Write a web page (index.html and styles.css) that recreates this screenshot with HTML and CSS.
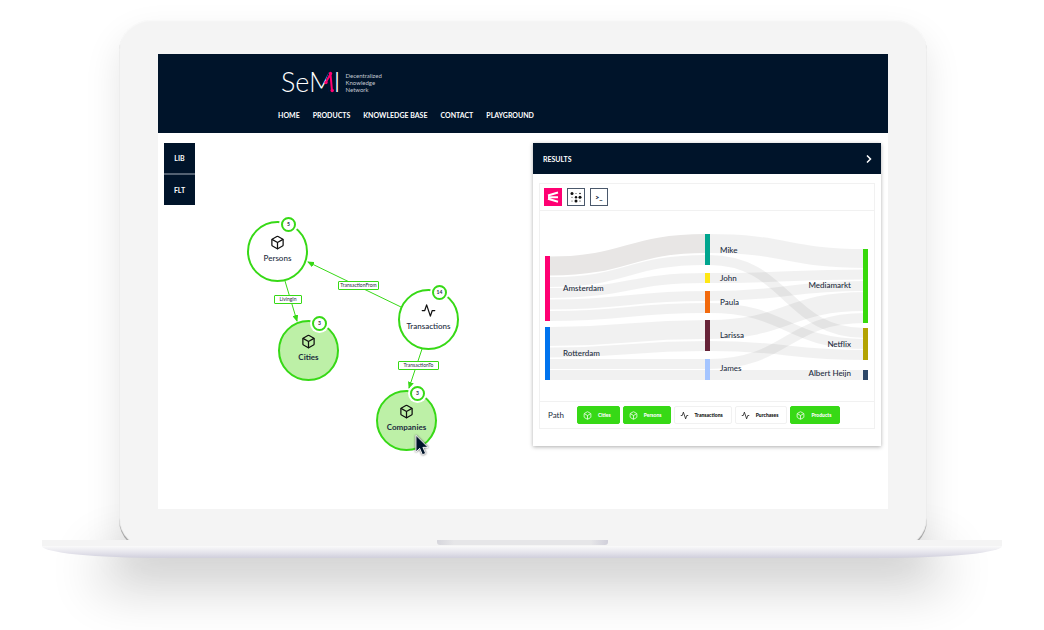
FILE: index.html
```html
<!DOCTYPE html>
<html lang="en">
<head>
<meta charset="utf-8">
<title>SeMI Playground</title>
<link rel="stylesheet" href="styles.css">
</head>
<body>
<svg class="defs" aria-hidden="true">
  <symbol id="cube" viewBox="0 0 24 24"><path d="M21 16V8a2 2 0 0 0-1-1.700l-7-4a2 2 0 0 0-2 0l-7 4A2 2 0 0 0 3 8v8a2 2 0 0 0 1 1.700l7 4a2 2 0 0 0 2 0l7-4a2 2 0 0 0 1-1.700z"/><path d="M3.300 7 12 12l8.700-5M12 22V12"/></symbol>
  <symbol id="pulse" viewBox="0 0 24 24"><path d="M22 12h-4l-3 9L9 3l-3 9H2"/></symbol>
</svg>
<div class="laptop">
  <div class="lid">
    <div class="screen">
      <header class="header">
        <a class="brand" href="#">
          <span class="logo">SeMI
            <svg class="logo-mark" viewBox="0 0 12 24" aria-hidden="true"><path class="mark-bg" d="M8.500 2 5 11M8.500 2v21"/><path d="M7.500 4 3 12M7.500 4l1.500 17"/><circle cx="7.500" cy="3.500" r="1.700"/><circle cx="3" cy="12.500" r="1.700"/><circle cx="9.200" cy="20.500" r="1.700"/></svg>
          </span>
          <span class="tagline">Decentralized<br>Knowledge<br>Network</span>
        </a>
        <nav class="nav">
          <a href="#">HOME</a><a href="#">PRODUCTS</a><a href="#">KNOWLEDGE BASE</a><a href="#">CONTACT</a><a href="#">PLAYGROUND</a>
        </nav>
      </header>
      <main class="workspace">
        <div class="tools"><button>LIB</button><button>FLT</button></div>
        <section class="graph">
          <svg class="edges" viewBox="0 0 338 316" aria-hidden="true">
            <defs><marker id="arrow" viewBox="0 0 7 6" refX="6" refY="3" markerWidth="7" markerHeight="6" markerUnits="userSpaceOnUse" orient="auto"><path d="M0 0l7 3-7 3z"/></marker></defs>
            <path d="M206 164 113 119"/><path d="M90 138 102 178"/><path d="M227 206 214 245"/>
          </svg>
          <span class="edge-label living">LivingIn</span>
          <span class="edge-label from">TransactionFrom</span>
          <span class="edge-label to">TransactionTo</span>
          <div class="node persons"><span class="count">5</span><svg><use href="#cube"/></svg><span>Persons</span></div>
          <div class="node transactions"><span class="count">14</span><svg><use href="#pulse"/></svg><span>Transactions</span></div>
          <div class="node active cities"><span class="count">3</span><svg><use href="#cube"/></svg><span>Cities</span></div>
          <div class="node active companies"><span class="count">3</span><svg><use href="#cube"/></svg><span>Companies</span></div>
          <svg class="cursor" viewBox="0 0 14 24" aria-hidden="true"><path d="M1 1v18l4-4 3 7 3.500-1.500-3-6.500H14z"/></svg>
        </section>
        <section class="results">
          <h2 class="results-title">RESULTS
            <button class="chevron" aria-label="Collapse"><svg viewBox="0 0 6 8"><path d="M1 .5 4.500 4 1 7.500"/></svg></button>
          </h2>
          <div class="frame">
            <div class="views">
              <button class="view selected" aria-label="Flow"><svg viewBox="0 0 16 16"><path d="M3 6.500 13 3.500M3 8.200h10M3 9.800l10 3"/></svg></button>
              <button class="view" aria-label="Matrix"><svg viewBox="0 0 16 16"><circle cx="4" cy="4.500" r="1.500"/><circle cx="8" cy="4.500" r=".5"/><circle cx="12" cy="4.500" r=".8"/><circle cx="4" cy="8.200" r=".5"/><circle cx="8" cy="8.200" r="1.200"/><circle cx="12" cy="8.200" r="1.500"/><circle cx="4" cy="12" r=".5"/><circle cx="8" cy="12" r="1.500"/><circle cx="12" cy="12" r=".6"/></svg></button>
              <button class="view" aria-label="Console">&gt;_</button>
            </div>
            <svg class="sankey" viewBox="540 211 334 190" role="img" aria-label="Transactions by city, person and company">
              <g class="links">
                <path class="hot" stroke-width="19" d="M550 266C628 266 628 243.500 706 243.500"/>
                <path stroke-width="10" d="M550 282C628 282 628 260 706 260"/>
                <path stroke-width="10" d="M550 293C628 293 628 278 706 278"/>
                <path stroke-width="10" d="M550 304.500C628 304.500 628 296 706 296"/>
                <path stroke-width="10" d="M550 316C628 316 628 308 706 308"/>
                <path stroke-width="19" d="M550 336.500C628 336.500 628 329.500 706 329.500"/>
                <path stroke-width="10" d="M550 352.500C628 352.500 628 346 706 346"/>
                <path stroke-width="10" d="M550 364H706"/>
                <path stroke-width="10" d="M550 375H706"/>
                <path stroke-width="19" d="M709 243.500C787 243.500 787 258.500 865 258.500"/>
                <path stroke-width="10" d="M709 260C787 260 787 333 865 333"/>
                <path stroke-width="10" d="M709 278C787 278 787 274.500 865 274.500"/>
                <path stroke-width="10" d="M709 296C787 296 787 286 865 286"/>
                <path stroke-width="10" d="M709 308C787 308 787 344 865 344"/>
                <path stroke-width="19" d="M709 329.500C787 329.500 787 301.500 865 301.500"/>
                <path stroke-width="10" d="M709 346C787 346 787 355 865 355"/>
                <path stroke-width="10" d="M709 364C787 364 787 318 865 318"/>
                <path stroke-width="10" d="M709 375H865"/>
              </g>
              <rect x="545" y="256" width="5" height="65" fill="#ff0072"/>
              <rect x="545" y="327" width="5" height="53" fill="#0073ee"/>
              <rect x="705" y="234" width="5" height="31" fill="#00a58e"/>
              <rect x="705" y="273" width="5" height="10" fill="#ffe714"/>
              <rect x="705" y="291" width="5" height="22" fill="#f26a0d"/>
              <rect x="705" y="320" width="5" height="31" fill="#662338"/>
              <rect x="705" y="359" width="5" height="21" fill="#a5c5ff"/>
              <rect x="863" y="249" width="5" height="74" fill="#37d90b"/>
              <rect x="863" y="328" width="5" height="32" fill="#b3a302"/>
              <rect x="863" y="370" width="5" height="10" fill="#2d4767"/>
              <text x="563" y="291">Amsterdam</text><text x="563" y="356">Rotterdam</text>
              <text x="720" y="253">Mike</text><text x="720" y="281">John</text><text x="720" y="305">Paula</text><text x="720" y="338">Larissa</text><text x="720" y="371">James</text>
              <g text-anchor="end"><text x="851" y="288">Mediamarkt</text><text x="851" y="347">Netflix</text><text x="851" y="376">Albert Heijn</text></g>
            </svg>
            <div class="path">
              <span class="path-title">Path</span>
              <button class="chip on"><svg><use href="#cube"/></svg>Cities</button>
              <button class="chip on"><svg><use href="#cube"/></svg>Persons</button>
              <button class="chip"><svg><use href="#pulse"/></svg>Transactions</button>
              <button class="chip"><svg><use href="#pulse"/></svg>Purchases</button>
              <button class="chip on"><svg><use href="#cube"/></svg>Products</button>
            </div>
          </div>
        </section>
      </main>
    </div>
  </div>
  <div class="base"><div class="deck"><div class="notch"></div></div><div class="edge"></div></div>
</div>
</body>
</html>
```

FILE: styles.css
```css
* { box-sizing: border-box; }
body { margin: 0; background: #fff; color: #1c2c40; font-family: Lato, "Open Sans", sans-serif; overflow-x: hidden; }
a { color: inherit; text-decoration: none; }
button { margin: 0; border: 0; font: inherit; color: inherit; cursor: pointer; }
svg { display: block; fill: none; }
.defs { display: block; width: 0; height: 0; position: absolute; }

.laptop { padding: 20px 42px 72px; }
.lid { margin: 0 75px 0 77px; padding: 34px 39px 41px; background: #f4f4f4; border-radius: 32px 32px 30px 30px; box-shadow: inset 0 1px 1px #fafafa, inset 0 -2px 1px #999, 0 16px 36px rgba(0,0,0,.1); }
.screen { background: #fff; }

.header { background: #00142a; color: #fff; padding: 14px 20px 12px 120px; }
.brand { display: flex; align-items: center; gap: 5px; height: 28px; padding-left: 3px; }
.logo { position: relative; font-size: 27px; line-height: 28px; font-weight: 300; }
.logo-mark { position: absolute; right: 6px; top: 2px; width: 12px; height: 24px; fill: #ff0072; stroke: #ff0072; stroke-width: 2; }
.logo-mark circle { stroke: none; }
.logo-mark .mark-bg { stroke: #00142a; stroke-width: 5; }
.tagline { font-size: 6px; line-height: 7px; color: #c2c9d1; }
.nav { display: flex; gap: 13px; margin-top: 13px; font-size: 7px; line-height: 12px; font-weight: 700; }

.workspace { display: flex; align-items: flex-start; padding: 10px 7px 50px 6px; }
.tools { flex: none; width: 31px; display: grid; gap: 2px; background: #536172; }
.tools button { height: 30px; padding: 0; background: #00142a; color: #fff; font-size: 7px; font-weight: 700; }

.graph { position: relative; flex: 1; min-width: 338px; height: 316px; }
.edges { position: absolute; left: 0; top: 0; width: 338px; height: 316px; stroke: #37d916; stroke-width: 1; }
.edges > path { marker-end: url(#arrow); }
.edges marker path { fill: #37d916; stroke: none; }
.node { position: absolute; width: 61px; height: 61px; padding-top: 12px; display: flex; flex-direction: column; align-items: center; gap: 2px; border: 2px solid #37d916; border-radius: 50%; background: #fff; font-size: 8px; line-height: 12px; font-weight: 500; }
.node > svg { width: 15px; height: 15px; stroke: #111; stroke-width: 2; stroke-linejoin: round; stroke-linecap: round; }
.node.active { background: #bdf0a7; font-weight: 700; }
.persons { left: 52px; top: 78px; }
.transactions { left: 203px; top: 146px; }
.cities { left: 83px; top: 177px; }
.companies { left: 181px; top: 247px; }
.count { position: absolute; left: 32px; top: -6px; width: 15px; height: 15px; border: 2px solid #37d916; border-radius: 50%; background: #fff; box-shadow: 0 0 0 2px #fff; font-size: 5px; line-height: 11px; font-weight: 700; text-align: center; }
.edge-label { position: absolute; width: 41px; height: 9px; border: 1px solid #37d916; border-radius: 1px; background: #fff; font-size: 5px; line-height: 7px; text-align: center; z-index: 1; }
.living { left: 79px; top: 152px; width: 28px; }
.from { left: 143px; top: 138px; }
.to { left: 203px; top: 218px; }
.cursor { position: absolute; left: 220px; top: 291px; width: 13px; height: 23px; fill: #00142a; stroke: #fff; stroke-width: 1; filter: drop-shadow(0 0 1px #555); z-index: 2; }

.results { flex: 0 1 348px; background: #fff; box-shadow: 0 1px 4px rgba(0,0,0,.32); padding-bottom: 17px; }
.results-title { margin: 0; height: 31px; padding: 0 9px 0 10px; display: flex; align-items: center; justify-content: space-between; background: #00142a; color: #fff; font-size: 7px; line-height: 12px; font-weight: 700; }
.chevron { padding: 0; background: none; }
.chevron svg { width: 6px; height: 8px; stroke: #fff; stroke-width: 1.500; }
.frame { margin: 9px 6px 0; border: 1px solid #f1f1f1; }
.views { display: flex; gap: 5px; padding: 4px; border-bottom: 1px solid #f1f1f1; }
.view { width: 18px; height: 18px; padding: 0; border: 1px solid #4a586b; background: #fff; font-size: 7px; line-height: 12px; font-weight: 900; }
.view svg { width: 16px; height: 16px; fill: #111; }
.view.selected { background: #ff0072; border-color: #ff0072; }
.view.selected svg { stroke: #fff; stroke-width: 2; }
.sankey { width: 100%; height: auto; }
.sankey text { font-size: 8px; font-weight: 500; fill: #1c2c40; }
.links { stroke: rgba(0,0,0,.053); }
.links .hot { stroke: #e8e6e5; }
.path { display: flex; align-items: center; gap: 3px; padding: 4px 8px; border-top: 1px solid #f1f1f1; }
.path-title { width: 26px; font-size: 8px; line-height: 12px; }
.chip { height: 18px; display: flex; align-items: center; gap: 6px; padding: 0 8px 0 5px; border: 1px solid #f1f1f1; border-radius: 2px; background: #fff; font-size: 5px; line-height: 8px; font-weight: 900; color: #111; }
.chip svg { width: 9px; height: 9px; stroke: currentColor; stroke-width: 2; stroke-linejoin: round; }
.chip.on { background: #37d916; border-color: #37d916; color: #fff; }

.base { position: relative; margin-top: -10px; }
.base::before { content: ""; position: absolute; z-index: -1; left: 70px; right: 70px; top: 0; height: 12px; border-radius: 6px; box-shadow: 0 24px 50px 16px rgba(0,0,0,.16); }
.deck { height: 6px; background: #f4f4f4; }
.notch { width: 171px; height: 5px; margin: 0 auto; border-radius: 0 0 3px 3px; background: linear-gradient(90deg, #d6d6dc, #e6e6e8 10%, #e6e6e8 90%, #d0cfda); }
.edge { height: 12px; background: linear-gradient(#fafafa, #e2e1ea 60%, #d0cfdc); border-radius: 0 0 120px 120px / 0 0 12px 12px; }
```
